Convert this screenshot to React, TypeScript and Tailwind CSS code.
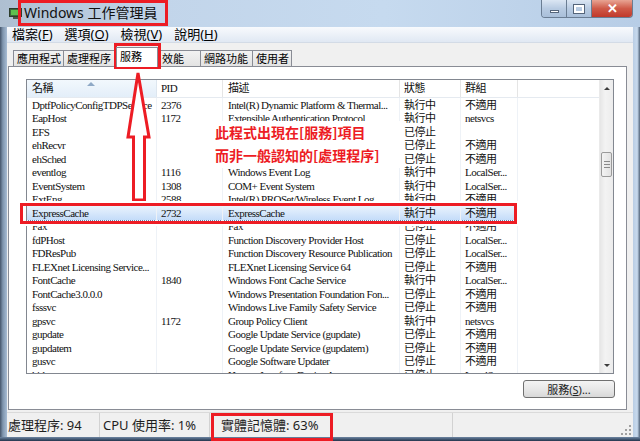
import React from "react";

type Row = [string, string, string, string, string];

const rows: Row[] = [
  ["DptfPolicyConfigTDPService", "2376", "Intel(R) Dynamic Platform & Thermal...", "執行中", "不適用"],
  ["EapHost", "1172", "Extensible Authentication Protocol", "執行中", "netsvcs"],
  ["EFS", "", "", "已停止", ""],
  ["ehRecvr", "", "", "已停止", "不適用"],
  ["ehSched", "", "", "已停止", "不適用"],
  ["eventlog", "1116", "Windows Event Log", "執行中", "LocalSer..."],
  ["EventSystem", "1308", "COM+ Event System", "執行中", "LocalSer..."],
  ["ExtEng", "2588", "Intel(R) PROSet/Wireless Event Log", "執行中", "不適用"],
  ["ExpressCache", "2732", "ExpressCache", "執行中", "不適用"],
  ["Fax", "", "Fax", "已停止", "不適用"],
  ["fdPHost", "", "Function Discovery Provider Host", "已停止", "LocalSer..."],
  ["FDResPub", "", "Function Discovery Resource Publication", "已停止", "LocalSer..."],
  ["FLEXnet Licensing Service...", "", "FLEXnet Licensing Service 64", "已停止", "不適用"],
  ["FontCache", "1840", "Windows Font Cache Service", "執行中", "LocalSer..."],
  ["FontCache3.0.0.0", "", "Windows Presentation Foundation Fon...", "已停止", "不適用"],
  ["fsssvc", "", "Windows Live Family Safety Service", "已停止", "不適用"],
  ["gpsvc", "1172", "Group Policy Client", "執行中", "netsvcs"],
  ["gupdate", "", "Google Update Service (gupdate)", "已停止", "不適用"],
  ["gupdatem", "", "Google Update Service (gupdatem)", "已停止", "不適用"],
  ["gusvc", "", "Google Software Updater", "已停止", "不適用"],
  ["hidserv", "", "Human Interface Device Access", "已停止", "LocalSer..."],
];

const tabs = [
  { label: "應用程式", w: "w-[50px]" },
  { label: "處理程序", w: "w-[53px]" },
  { label: "服務", w: "w-[42px]", active: true },
  { label: "效能", w: "w-[42px]" },
  { label: "網路功能", w: "w-[52px]" },
  { label: "使用者", w: "w-[40px]" },
];

const cell = "h-full whitespace-nowrap overflow-hidden border-r border-[#eef2f7] flex items-center";

const Cells = ({ r }: { r: Row }) => (
  <>
    <div className={`${cell} w-[130px] pl-[5px]`}>{r[0]}</div>
    <div className={`${cell} w-[66px] pl-[4px]`}>{r[1]}</div>
    <div className={`${cell} w-[177px] pl-[5px]`}>{r[2]}</div>
    <div className={`${cell} w-[61px] pl-[4px]`}>{r[3]}</div>
    <div className={`${cell} w-[57px] pl-[4px]`}>{r[4]}</div>
  </>
);

const TaskIcon = () => (
  <svg width="13" height="11" viewBox="0 0 13 11" className="mt-[8px]">
    <rect x="0.5" y="0.5" width="12" height="8" fill="#3c6b3c" stroke="#2d3d2d" />
    <rect x="2" y="2" width="9" height="5" fill="#5fbf4f" />
    <rect x="4" y="9" width="5" height="2" fill="#4a5a4a" />
  </svg>
);

export default function App() {
  return (
    <div className="relative w-[640px] h-[441px] overflow-hidden bg-[linear-gradient(90deg,#aebfd1_0%,#c2d5ea_25%,#c6daef_60%,#b7cde6_100%)] font-['Noto_Sans','Noto_Sans_CJK_TC',sans-serif] text-black">
      {/* title bar */}
      <div className="flex h-[27px] items-start">
        <div className="w-[9px]" />
        <TaskIcon />
        <div className="ml-[-4px] h-[26px] w-[150px] border-[3px] border-[#ed1c24] flex items-center pl-[3px] text-[14px] leading-none whitespace-nowrap text-[#111]">
          Windows 工作管理員
        </div>
        <div className="ml-auto mr-[7px] flex h-[18px] rounded-b-[4px] border border-t-0 border-[#6a7d93] overflow-hidden">
          <div className="w-[25px] bg-[linear-gradient(180deg,#dbe6f3,#b8cbe2_50%,#a9bfd9)] border-r border-[#6a7d93] flex items-end justify-center pb-[4px]">
            <div className="w-[9px] h-[3px] bg-white border border-[#55657a]" />
          </div>
          <div className="w-[25px] bg-[linear-gradient(180deg,#dbe6f3,#b8cbe2_50%,#a9bfd9)] border-r border-[#6a7d93] flex items-center justify-center">
            <div className="w-[10px] h-[8px] border-2 border-white outline outline-1 outline-[#55657a]" />
          </div>
          <div className="w-[40px] bg-[linear-gradient(180deg,#e8a493,#cf5a48_50%,#c0392b)] flex items-center justify-center text-white text-[13px] font-bold leading-none">
            ✕
          </div>
        </div>
      </div>

      <div className="flex h-[410px]">
        <div className="w-[7px] bg-[linear-gradient(90deg,#44546a,#7e94ad_40%,#a7bcd4)]" />
        <div className="w-[626px] flex flex-col bg-[#f0f0f0]">
          {/* menu */}
          <div className="h-[16px] flex items-center gap-[12px] pl-[5px] text-[13px] leading-none bg-[linear-gradient(180deg,#f8fafd,#e0e8f3)] border-b border-[#d3dbe6]">
            <span>檔案(<u>F</u>)</span>
            <span>選項(<u>O</u>)</span>
            <span>檢視(<u>V</u>)</span>
            <span>說明(<u>H</u>)</span>
          </div>
          {/* tabs */}
          <div className="h-[23px] flex items-end pl-[6px]">
            {tabs.map((t) =>
              t.active ? (
                <div
                  key={t.label}
                  className={`${t.w} relative z-10 mb-[-1px] h-[20px] bg-white border border-b-0 border-[#898c95] pl-[3px] text-[11px] leading-[18px]`}
                >
                  {t.label}
                </div>
              ) : (
                <div
                  key={t.label}
                  className={`${t.w} h-[16px] bg-[linear-gradient(180deg,#f2f2f2,#e3e3e3)] border border-b-0 border-r-0 last:border-r border-[#898c95] pl-[3px] text-[11px] leading-[15px]`}
                >
                  {t.label}
                </div>
              )
            )}
          </div>
          {/* panel */}
          <div className="ml-[1px] w-[619px] h-[344px] bg-white border border-[#898c95] flex flex-col pt-[12px] pl-[17px] pr-[12px]">
            <div className="w-[588px] h-[295px] border border-[#828790] flex font-['Liberation_Serif','Noto_Sans_CJK_TC',serif] text-[11px] tracking-[-0.5px] text-[#111]">
              <div className="w-[572px] flex flex-col overflow-hidden">
                <div className="h-[18px] flex shrink-0 border-b border-[#e5eaf0]">
                  <div className="relative w-[130px] pl-[5px] flex items-center bg-[linear-gradient(180deg,#f2f8fd,#e3eef9)] border-r border-[#dde6ef]">
                    名稱
                    <div className="absolute left-[60px] top-[2px] w-0 h-0 border-l-[4px] border-r-[4px] border-b-[4px] border-l-transparent border-r-transparent border-b-[#8fa9c6]" />
                  </div>
                  <div className="w-[66px] pl-[4px] flex items-center border-r border-[#e5e5e5]">PID</div>
                  <div className="w-[177px] pl-[5px] flex items-center border-r border-[#e5e5e5]">描述</div>
                  <div className="w-[61px] pl-[4px] flex items-center border-r border-[#e5e5e5]">狀態</div>
                  <div className="w-[57px] pl-[4px] flex items-center border-r border-[#e5e5e5]">群組</div>
                </div>
                {rows.map((r) =>
                  r[0] === "ExpressCache" ? (
                    <div key={r[0]} className="h-[13.5px] shrink-0 flex">
                      <div className="flex h-full bg-[linear-gradient(180deg,#eaf3fd,#c4dcf9)] outline outline-1 outline-dotted outline-[#5b7fae]">
                        <Cells r={r} />
                      </div>
                    </div>
                  ) : (
                    <div key={r[0]} className="h-[13.5px] shrink-0 flex">
                      <Cells r={r} />
                    </div>
                  )
                )}
              </div>
              {/* scrollbar */}
              <div className="w-[14px] flex flex-col bg-[linear-gradient(90deg,#e6e6e6,#f3f3f3_40%,#ececec)] border-l border-[#eaeaea]">
                <div className="h-[16px] flex items-center justify-center">
                  <div className="w-0 h-0 border-l-[3px] border-r-[3px] border-b-[3px] border-l-transparent border-r-transparent border-b-[#3c3c3c]" />
                </div>
                <div className="h-[56px]" />
                <div className="mx-[1px] h-[25px] rounded-[2px] border border-[#9a9a9a] bg-[linear-gradient(90deg,#f3f3f3,#e2e2e2)] flex flex-col items-center justify-center gap-[2px]">
                  <div className="w-[6px] h-px bg-[#8a8a8a]" />
                  <div className="w-[6px] h-px bg-[#8a8a8a]" />
                  <div className="w-[6px] h-px bg-[#8a8a8a]" />
                </div>
                <div className="flex-1" />
                <div className="h-[16px] flex items-center justify-center">
                  <div className="w-0 h-0 border-l-[3px] border-r-[3px] border-t-[3px] border-l-transparent border-r-transparent border-t-[#3c3c3c]" />
                </div>
              </div>
            </div>
            <div className="mt-[6px] self-end mr-[-1px] w-[92px] h-[18px] rounded-[3px] border border-[#707070] bg-[linear-gradient(180deg,#f4f4f4,#e8e8e8_50%,#d8d8d8)] flex items-center justify-center text-[11px] leading-none text-[#222]">
              服務(<u>S</u>)...
            </div>
          </div>
          <div className="h-[2px]" />
          {/* status bar */}
          <div className="h-[25px] flex items-center text-[13px] leading-none text-[#1e1e1e] border-t border-[#dadada]">
            <div className="w-[93px] h-full flex items-center pl-[1px] border-r border-[#d2d2d2]">處理程序: 94</div>
            <div className="w-[110px] h-full flex items-center pl-[3px] border-r border-[#d2d2d2]">CPU 使用率: 1%</div>
            <div className="w-[243px] h-full flex items-center pl-[11px] border-r border-[#d2d2d2]">實體記憶體: 63%</div>
            <div className="flex-1 h-full flex items-end justify-end pr-[2px] pb-[2px]">
              <svg width="10" height="10" viewBox="0 0 10 10">
                <g fill="#a0a0a0">
                  <rect x="8" y="0" width="2" height="2" />
                  <rect x="4" y="4" width="2" height="2" />
                  <rect x="8" y="4" width="2" height="2" />
                  <rect x="0" y="8" width="2" height="2" />
                  <rect x="4" y="8" width="2" height="2" />
                  <rect x="8" y="8" width="2" height="2" />
                </g>
              </svg>
            </div>
          </div>
        </div>
        <div className="w-[7px] bg-[linear-gradient(90deg,#b9cde4,#c8daee_60%,#52647a)]" />
      </div>
      <div className="h-[4px] bg-[linear-gradient(180deg,#6e86a3,#23344c)]" />

      {/* annotations */}
      <div className="absolute left-[114px] top-[43px] w-[47px] h-[26px] border-[3px] border-[#ed1c24]" />
      <svg className="absolute left-[124px] top-[70px]" width="30" height="134" viewBox="0 0 30 134">
        <path d="M14 3 L25 67 L20.5 67 L20.5 130 L9.5 130 L9.5 67 L4 67 Z" fill="white" stroke="#ed1c24" strokeWidth="3" strokeLinejoin="miter" />
      </svg>
      <div className="absolute left-[212px] top-[121px] w-[188px] h-[47px] bg-white pl-[3px] pt-[4px] font-['Noto_Sans_CJK_TC',sans-serif] text-[14px] font-bold leading-[14px] text-[#ed1c24]">
        <div>此程式出現在[服務]項目</div>
        <div className="mt-[9px]">而非一般認知的[處理程序]</div>
      </div>
      <div className="absolute left-[20px] top-[203px] w-[497px] h-[21px] border-[3px] border-[#ed1c24] shadow-[0_0_0_2px_white]" />
      <div className="absolute left-[211px] top-[413px] w-[122px] h-[28px] border-[3px] border-[#ed1c24]" />
    </div>
  );
}
